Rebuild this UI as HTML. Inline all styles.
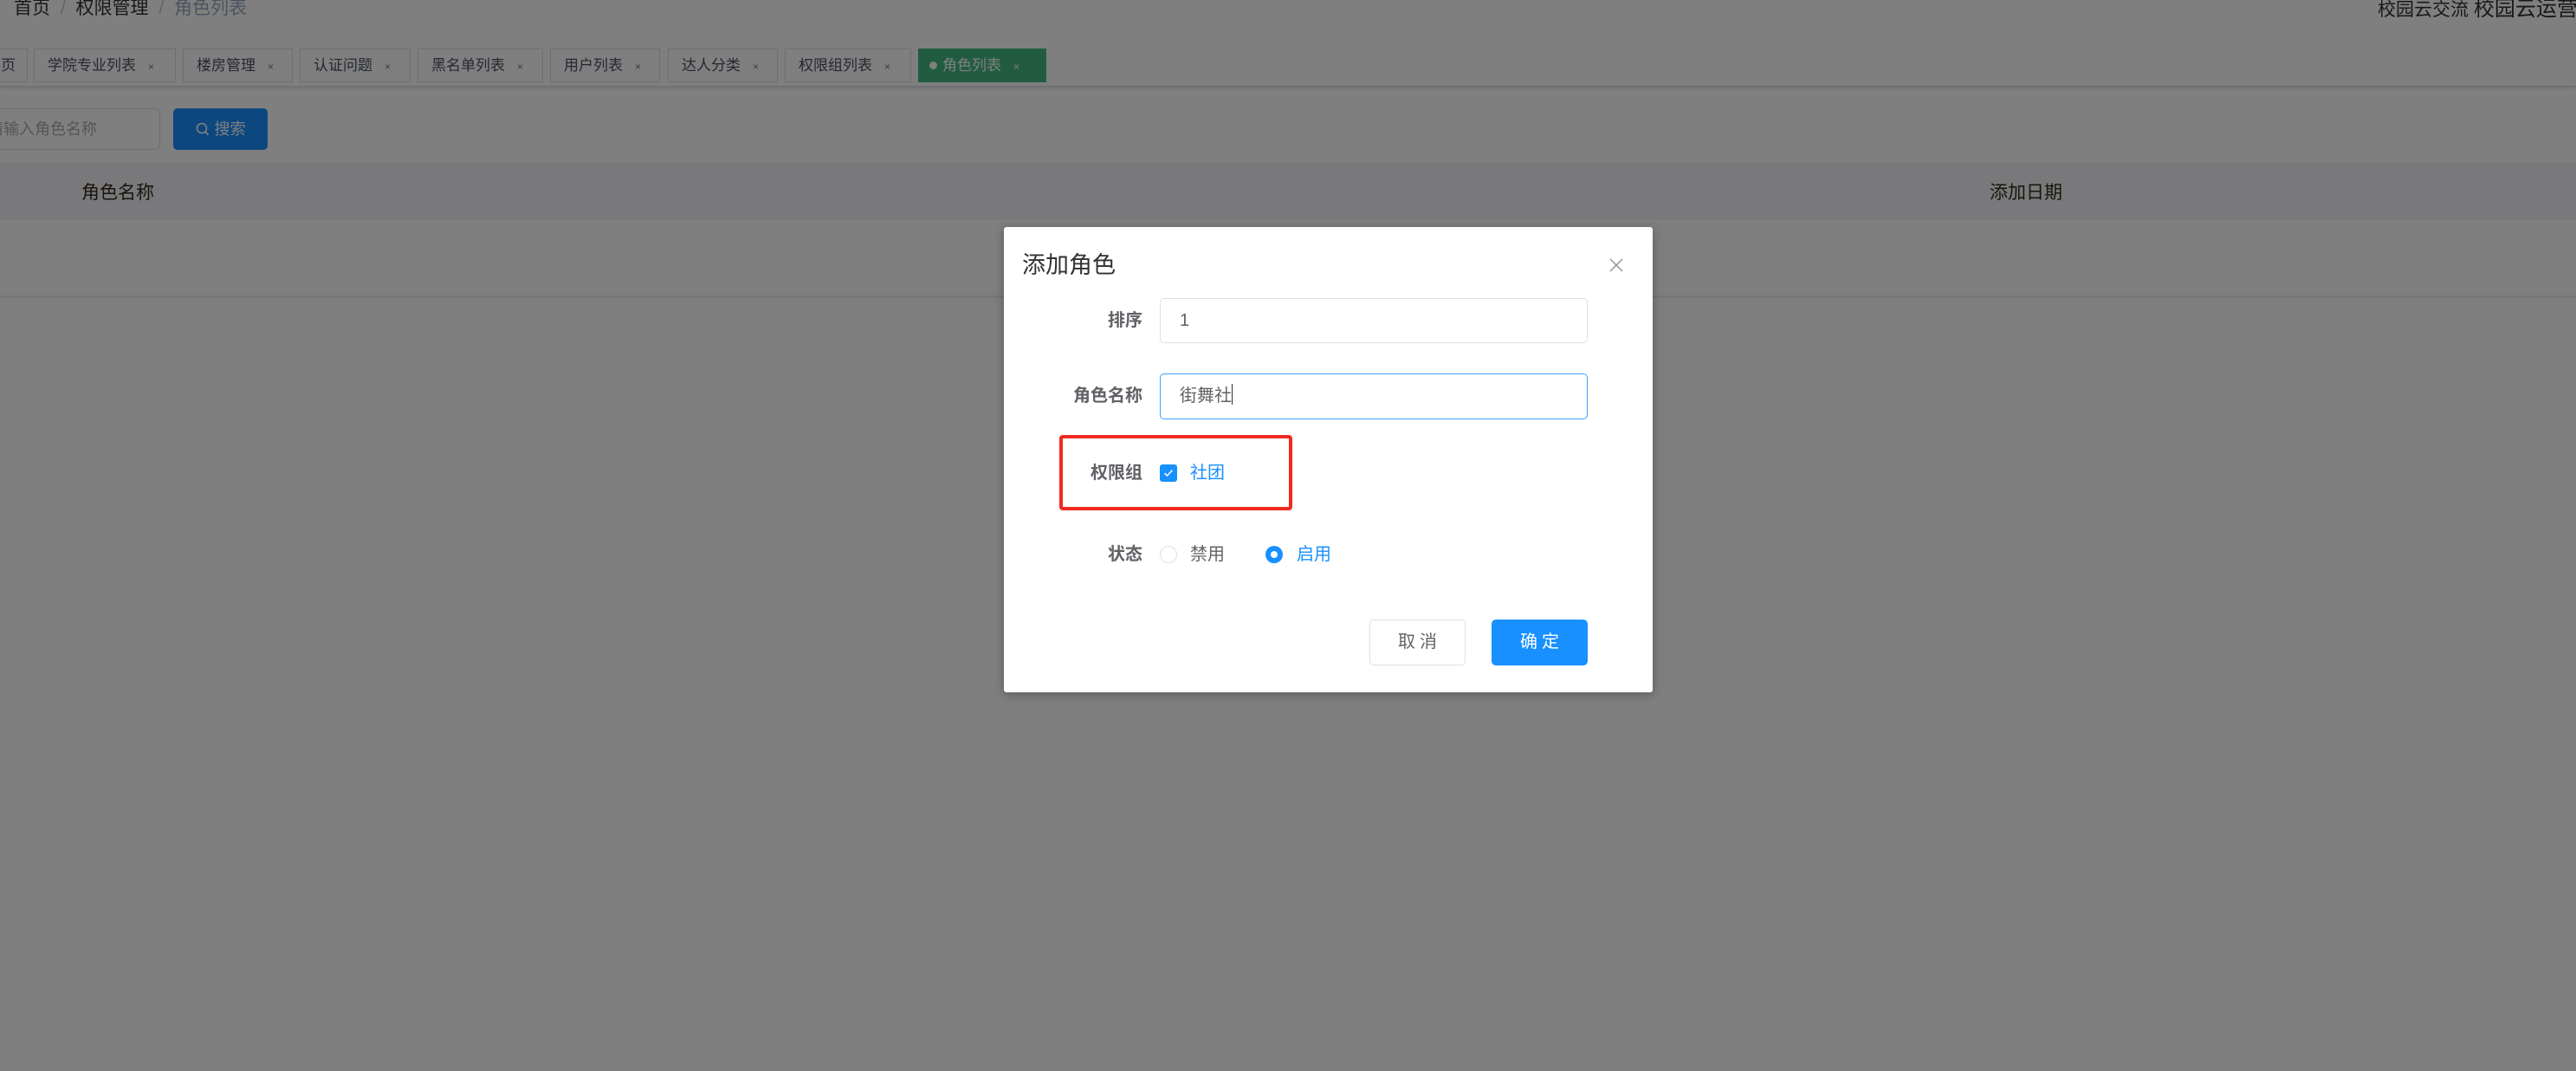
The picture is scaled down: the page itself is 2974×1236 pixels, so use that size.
<!DOCTYPE html>
<html><head><meta charset="utf-8"><style>
*{margin:0;padding:0;box-sizing:border-box}
body{width:2974px;height:1236px;position:relative;overflow:hidden;background:#fff;font-family:"Liberation Sans","Noto Sans CJK SC",sans-serif;color:#606266}
.a{position:absolute;white-space:nowrap}
.tab{position:absolute;top:56px;height:39px;border:1px solid #d8dce5;background:#fff;font-size:17px;line-height:37px;color:#495060;padding-left:15px}
.tab i{font-style:normal;font-size:12px;color:#777;margin-left:14px}
.ov{position:absolute;left:0;top:0;width:2974px;height:1236px;background:rgba(0,0,0,.5)}
.lbl{position:absolute;right:0;font-weight:bold;font-size:20px;color:#606266;text-align:right}
</style></head><body>
<div class="a" style="left:16px;top:-3px;font-size:21px;line-height:26px;color:#303133">首页 <span style="color:#c0c4cc;margin:0 6px">/</span> 权限管理 <span style="color:#c0c4cc;margin:0 6px">/</span> <span style="color:#97a8be">角色列表</span></div>
<div class="a" style="left:2745px;top:-2px;font-size:21px;line-height:26px;color:#303133">校园云交流 <span style="font-size:24px">校园云运营</span></div>
<div class="a" style="left:0;top:50px;width:2974px;height:50px;background:#fff;border-bottom:1px solid #d8dce5;box-shadow:0 2px 4px rgba(0,0,0,.12)"></div>
<div class="tab" style="left:-10px;width:42px;padding-left:10px">页</div>
<div class="tab" style="left:39px;width:164px">学院专业列表<i>×</i></div>
<div class="tab" style="left:211px;width:127px">楼房管理<i>×</i></div>
<div class="tab" style="left:346px;width:128px">认证问题<i>×</i></div>
<div class="tab" style="left:482px;width:145px">黑名单列表<i>×</i></div>
<div class="tab" style="left:635px;width:127px">用户列表<i>×</i></div>
<div class="tab" style="left:771px;width:127px">达人分类<i>×</i></div>
<div class="tab" style="left:906px;width:146px">权限组列表<i>×</i></div>
<div class="tab" style="left:1060px;width:148px;background:#42b983;border-color:#42b983;color:#fff;padding-left:12px"><span style="display:inline-block;width:9px;height:9px;border-radius:50%;background:#fff;margin-right:6px;vertical-align:1px"></span>角色列表<i style="color:#fff">×</i></div>
<div class="a" style="left:-40px;top:125px;width:225px;height:48px;border:1px solid #dcdfe6;border-radius:5px;font-size:18px;line-height:46px;padding-left:25px;color:#a8abb2">请输入角色名称</div>
<div class="a" style="left:200px;top:125px;width:109px;height:48px;background:#1890ff;border-radius:5px;color:#fff;font-size:18px;line-height:48px;text-align:center"><svg width="16" height="16" viewBox="0 0 16 16" style="vertical-align:-2px;margin-right:6px"><circle cx="7" cy="7" r="5.5" fill="none" stroke="#fff" stroke-width="1.6"/><path d="M11 11l3.5 3.5" stroke="#fff" stroke-width="1.6"/></svg>搜索</div>
<div class="a" style="left:0;top:188px;width:2974px;height:65px;background:#f2f3f6;border-bottom:1px solid #ebeef5"></div>
<div class="a" style="left:94px;top:206px;font-size:21px;color:#332a1a">角色名称</div>
<div class="a" style="left:2297px;top:206px;font-size:21px;color:#332a1a">添加日期</div>
<div class="a" style="left:0;top:341px;width:2974px;height:3px;background:#ebeef5"></div>
<div class="ov"></div>
<div class="a" style="left:1159px;top:262px;width:749px;height:537px;background:#fff;border-radius:3px;box-shadow:0 2px 12px rgba(0,0,0,.3)">
 <div class="a" style="left:21px;top:22px;font-size:27px;color:#303133">添加角色</div>
 <svg class="a" style="left:699px;top:36px" width="16" height="16" viewBox="0 0 16 16"><path d="M1 1L15 15M15 1L1 15" stroke="#909399" stroke-width="1.5"/></svg>
 <div class="a" style="left:0;top:93px;width:160px;height:30px"><div class="lbl" style="line-height:30px">排序</div></div>
 <div class="a" style="left:180px;top:82px;width:494px;height:52px;border:1px solid #dcdfe6;border-radius:5px;font-size:20px;line-height:50px;padding-left:22px;color:#606266">1</div>
 <div class="a" style="left:0;top:180px;width:160px;height:30px"><div class="lbl" style="line-height:30px">角色名称</div></div>
 <div class="a" style="left:180px;top:169px;width:494px;height:53px;border:1px solid #409eff;border-radius:5px;font-size:20px;line-height:51px;padding-left:22px;color:#606266">街舞社<span style="display:inline-block;width:1px;height:24px;background:#333;vertical-align:-4px"></span></div>
 <div class="a" style="left:64px;top:240px;width:269px;height:87px;border:4px solid #ef2a1f;border-radius:4px"></div>
 <div class="a" style="left:0;top:269px;width:160px;height:30px"><div class="lbl" style="line-height:30px">权限组</div></div>
 <div class="a" style="left:180px;top:274px;width:20px;height:20px;background:#1890ff;border-radius:3px"><svg width="20" height="20" viewBox="0 0 20 20"><path d="M5.5 10l3 3 6-6.5" fill="none" stroke="#fff" stroke-width="1.5"/></svg></div>
 <div class="a" style="left:215px;top:269px;font-size:20px;line-height:30px;color:#1890ff">社团</div>
 <div class="a" style="left:0;top:363px;width:160px;height:30px"><div class="lbl" style="line-height:30px">状态</div></div>
 <div class="a" style="left:180px;top:368px;width:20px;height:20px;border:1px solid #dcdfe6;border-radius:50%"></div>
 <div class="a" style="left:215px;top:363px;font-size:20px;line-height:30px;color:#606266">禁用</div>
 <div class="a" style="left:302px;top:368px;width:20px;height:20px;background:#1890ff;border-radius:50%"><div style="position:absolute;left:6px;top:6px;width:8px;height:8px;border-radius:50%;background:#fff"></div></div>
 <div class="a" style="left:338px;top:363px;font-size:20px;line-height:30px;color:#1890ff">启用</div>
 <div class="a" style="left:422px;top:453px;width:111px;height:53px;border:1px solid #dcdfe6;border-radius:5px;font-size:20px;line-height:51px;text-align:center;color:#606266;letter-spacing:5px;padding-left:5px">取消</div>
 <div class="a" style="left:563px;top:453px;width:111px;height:53px;background:#1890ff;border-radius:5px;font-size:20px;line-height:53px;text-align:center;color:#fff;letter-spacing:5px;padding-left:5px">确定</div>
</div>
</body></html>
